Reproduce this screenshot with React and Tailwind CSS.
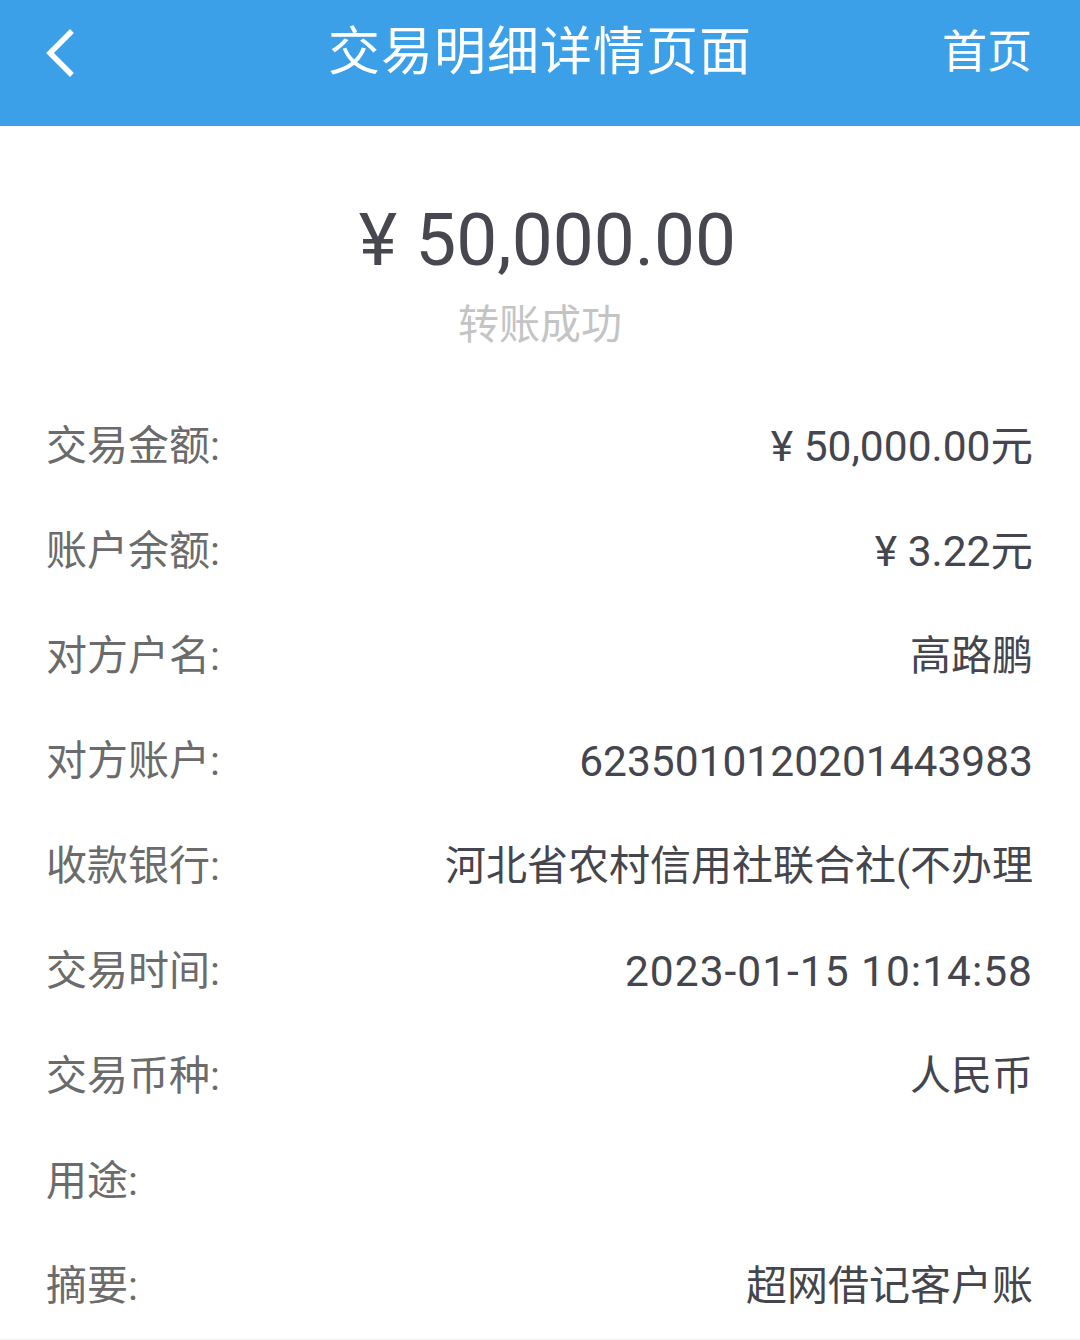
import React from 'react';

const rows = [
  { label: '交易金额:', value: '¥ 50,000.00元', num: true },
  { label: '账户余额:', value: '¥ 3.22元', num: true },
  { label: '对方户名:', value: '高路鹏' },
  { label: '对方账户:', value: '6235010120201443983', num: true },
  { label: '收款银行:', value: '河北省农村信用社联合社(不办理' },
  { label: '交易时间:', value: '2023-01-15 10:14:58', num: true, wide: true },
  { label: '交易币种:', value: '人民币' },
  { label: '用途:', value: '' },
  { label: '摘要:', value: '超网借记客户账' },
];

const App = () => {
  return (
    <div
      className="w-[1080px] h-[1340px] bg-white overflow-hidden"
      style={{ fontFamily: '"Roboto", "Noto Sans CJK SC", "Noto Sans", sans-serif' }}
    >
      {/* top bar */}
      <div className="h-[126px] bg-[#3ba0e8] flex items-center justify-between pl-[44px] pr-[48px] relative">
        <svg width="32" height="48" viewBox="0 0 32 48" className="-mt-[20px]">
          <path d="M26 4 L6 24 L26 44" fill="none" stroke="#fff" strokeWidth="5.5" strokeLinecap="square" />
        </svg>
        <div className="absolute left-0 right-0 top-0 h-[106px] flex items-center justify-center text-white text-[52px] tracking-[1px] pointer-events-none">
          交易明细详情页面
        </div>
        <div className="text-white text-[45px] -mt-[20px]">首页</div>
      </div>

      {/* amount */}
      <div className="flex flex-col items-center pt-[74px] pb-[44px]">
        <div className="h-[80px] leading-[80px] text-[73px] text-[#474750] ml-[15px]">¥ 50,000.00</div>
        <div className="mt-[20px] h-[50px] leading-[50px] text-[41px] text-[#c4c4c4]">转账成功</div>
      </div>

      {/* detail rows */}
      <div className="flex flex-col border-b-2 border-[#f2f2f2]">
        {rows.map((r) => (
          <div key={r.label} className="h-[105px] flex items-center justify-between pl-[46px] pr-[47px]">
            <span className="text-[41px] text-[#6b6b6b] whitespace-nowrap">{r.label}</span>
            <span
              className={
                'text-[#45454d] whitespace-nowrap overflow-hidden ml-[40px] ' +
                (r.num ? 'text-[42.5px] ' : 'text-[41px] ') +
                (r.wide ? 'tracking-[1px]' : '')
              }
            >
              {r.value}
            </span>
          </div>
        ))}
      </div>
    </div>
  );
};

export default App;
